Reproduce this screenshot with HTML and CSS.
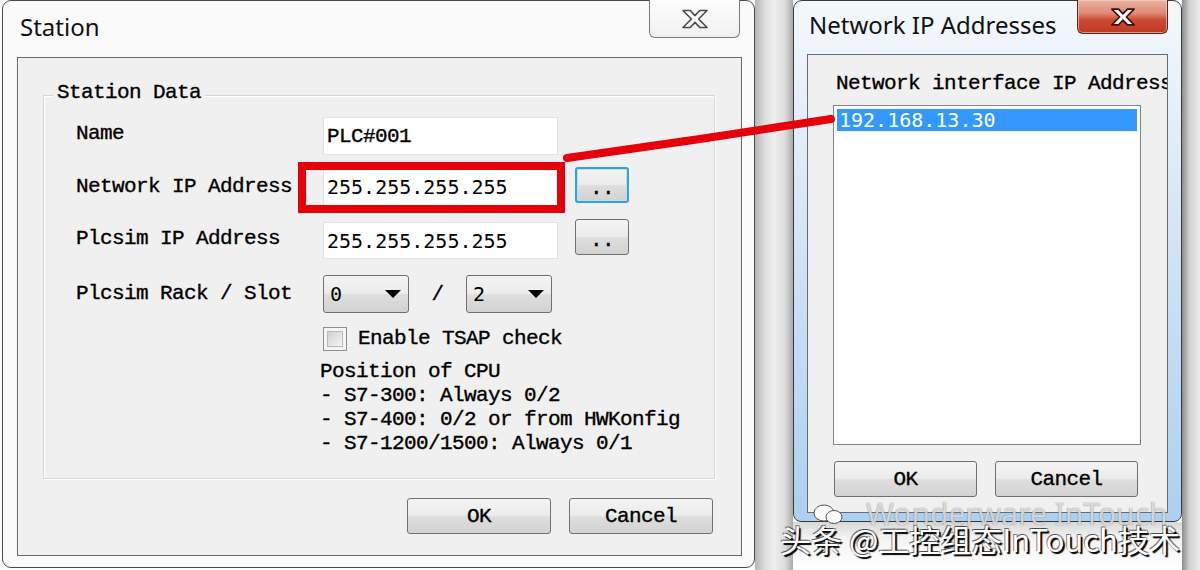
FILE: index.html
```html
<!DOCTYPE html>
<html>
<head>
<meta charset="utf-8">
<link rel="stylesheet" href="styles.css">
</head>
<body>
<div class="screen">
  <div class="win win-left">
    <div class="titlebar">
      <div class="title">Station</div>
      <div class="close close-grey">
        <svg width="28" height="20" viewBox="0 0 28 20"><path d="M2 1.5H9.2L14 6.6L18.8 1.5H26L17.6 10L26 18.5H18.8L14 13.4L9.2 18.5H2L10.4 10Z" fill="#fff" stroke="#4a4a4a" stroke-width="1.6" stroke-linejoin="round"/></svg>
      </div>
    </div>
    <div class="client">
      <div class="group">
        <div class="legend">Station Data</div>
        <div class="row r1">
          <div class="label lift">Name</div>
          <div class="edit">PLC#001</div>
        </div>
        <div class="row r2">
          <div class="label">Network IP Address</div>
          <div class="edit ip e2">255.255.255.255</div>
          <div class="dots focus">..</div>
        </div>
        <div class="row r3">
          <div class="label">Plcsim IP Address</div>
          <div class="edit ip e3">255.255.255.255</div>
          <div class="dots">..</div>
        </div>
        <div class="row r4">
          <div class="label">Plcsim Rack / Slot</div>
          <div class="combo"><span class="cval">0</span><i class="arrow"></i></div>
          <span class="slash">/</span>
          <div class="combo"><span class="cval">2</span><i class="arrow"></i></div>
        </div>
        <div class="row r5">
          <div class="label"></div>
          <div class="check"><span class="check-in"></span></div>
          <span class="check-text">Enable TSAP check</span>
        </div>
        <div class="note">Position of CPU
- S7-300: Always 0/2
- S7-400: 0/2 or from HWKonfig
- S7-1200/1500: Always 0/1</div>
      </div>
      <div class="actions">
        <div class="btn">OK</div>
        <div class="btn">Cancel</div>
      </div>
    </div>
  </div>

  <div class="gap"></div>

  <div class="right-col">
    <div class="win win-right">
      <div class="titlebar tb-right">
        <div class="title">Network IP Addresses</div>
        <div class="close close-red">
          <svg width="26" height="20" viewBox="0 0 28 20"><path d="M2 1.5H9.2L14 6.6L18.8 1.5H26L17.6 10L26 18.5H18.8L14 13.4L9.2 18.5H2L10.4 10Z" fill="#fff" stroke="#3a1410" stroke-width="1.8" stroke-linejoin="round"/></svg>
        </div>
      </div>
      <div class="client client-r">
        <div class="ni-label">Network interface IP Address</div>
        <div class="listbox">
          <div class="sel">192.168.13.30</div>
        </div>
        <div class="actions-r">
          <div class="btn btn-r">OK</div>
          <div class="btn btn-r">Cancel</div>
        </div>
      </div>
    </div>
    <div class="below"></div>
  </div>

  <div class="edge"></div>

  <svg class="annot" width="1200" height="570" viewBox="0 0 1200 570">
    <rect x="302" y="166" width="259" height="43" fill="none" stroke="#e6000a" stroke-width="8"/>
    <path d="M567 158 L700 139 L831 119" fill="none" stroke="#e6000a" stroke-width="8" stroke-linecap="round"/>
  </svg>

  <div class="wm-ghost">Wonderware InTouch</div>
  <svg class="wm-icon" width="34" height="24" viewBox="0 0 34 24">
    <ellipse cx="12" cy="11" rx="10" ry="8" fill="#fff" stroke="#555" stroke-width="1"/>
    <ellipse cx="22" cy="15" rx="8" ry="6.5" fill="#fff" stroke="#555" stroke-width="1"/>
  </svg>
  <div class="watermark">头条 @工控组态InTouch技术</div>
</div>
</body>
</html>
```

FILE: styles.css
```css
* { box-sizing: border-box; }

body {
  margin: 0;
  width: 1200px;
  height: 570px;
  overflow: hidden;
  background: #ffffff;
  font-family: "Liberation Mono", "DejaVu Sans Mono", monospace;
  font-size: 21px;
  letter-spacing: -0.6px;
  color: #000;
  -webkit-text-stroke: 0.35px #000;
}

.screen {
  position: relative;
  display: flex;
  align-items: flex-start;
  width: 1200px;
  height: 570px;
}

/* ---------- windows ---------- */
.win {
  display: flex;
  flex-direction: column;
  flex: none;
}

.win-left {
  margin-left: 2px;
  width: 753px;
  height: 568px;
  border: 1px solid #4a4a4a;
  border-radius: 9px;
  background: #fafafa;
}

.titlebar {
  display: flex;
  justify-content: space-between;
  align-items: flex-start;
  height: 56px;
  flex: none;
}

.title {
  padding: 10px 0 0 17px;
  font-family: "Noto Sans", "Open Sans", sans-serif;
  font-size: 24px;
  line-height: 32px;
  letter-spacing: 0;
  color: #111;
  -webkit-text-stroke: 0;
}

.close {
  width: 91px;
  height: 38px;
  margin-top: -1px;
  margin-right: 14px;
  border: 1px solid #7a7a7a;
  border-top: none;
  border-radius: 0 0 6px 6px;
  display: flex;
  align-items: center;
  justify-content: center;
}

.close-grey {
  background: linear-gradient(#fdfdfd, #f0f0f0);
}

.client {
  margin: 0 12px 11px 14px;
  height: 499px;
  border: 1px solid #6a6a6a;
  background: #f0f0f0;
  display: flex;
  flex-direction: column;
  flex: none;
}

/* ---------- group box ---------- */
.group {
  margin: 37px 26px 0 25px;
  height: 384px;
  border: 1px solid #d6d6d6;
  box-shadow: inset 1px 1px 0 #fff, 1px 1px 0 #fff;
  flex: none;
}

.legend {
  width: max-content;
  margin: -15px 0 0 9px;
  padding: 0 4px;
  background: #f0f0f0;
  line-height: 24px;
}

.row {
  display: flex;
  align-items: flex-start;
  padding-left: 32px;
}

.r1 { margin-top: 12px; height: 38px; }
.r2 { margin-top: 12px; height: 39px; }
.r3 { margin-top: 13px; height: 40px; }
.r4 { margin-top: 16px; height: 38px; }
.r5 { margin-top: 14px; height: 24px; }

.label {
  width: 247px;
  align-self: center;
  white-space: pre;
  line-height: 24px;
  flex: none;
}

.lift { margin-bottom: 4px; }

.edit {
  width: 235px;
  height: 38px;
  background: #fff;
  border: 1px solid #e2e2e2;
  padding-left: 3px;
  display: flex;
  align-items: center;
  flex: none;
}

.ip {
  font-family: "DejaVu Sans Mono", monospace;
  font-size: 20px;
  letter-spacing: 0;
  -webkit-text-stroke: 0;
}

.e2 { margin-top: 1px; }
.e3 { margin-top: 3px; height: 37px; }

.dots {
  width: 54px;
  height: 36px;
  margin-left: 17px;
  border: 1px solid #6f6f6f;
  border-radius: 3px;
  background: linear-gradient(#f3f3f3 0%, #ececec 48%, #dedede 52%, #d2d2d2 100%);
  display: flex;
  justify-content: center;
  align-items: center;
  padding-top: 6px;
  flex: none;
}

.dots.focus {
  border: 2px solid #3a9fd6;
  box-shadow: inset 0 0 0 1px #b6e3f8;
}

.combo {
  width: 86px;
  height: 38px;
  border: 1px solid #6f6f6f;
  border-radius: 3px;
  background: linear-gradient(#f3f3f3 0%, #ececec 48%, #dedede 52%, #d2d2d2 100%);
  display: flex;
  align-items: center;
  justify-content: space-between;
  padding: 0 7px 0 6px;
  font-family: "DejaVu Sans Mono", monospace;
  font-size: 20px;
  letter-spacing: 0;
  -webkit-text-stroke: 0;
  flex: none;
}

.arrow {
  width: 0;
  height: 0;
  border-left: 8px solid transparent;
  border-right: 8px solid transparent;
  border-top: 8px solid #000;
}

.slash {
  width: 57px;
  text-align: center;
  align-self: center;
  flex: none;
}

.check {
  width: 24px;
  height: 24px;
  border: 1px solid #8e8f8f;
  background: #f4f4f4;
  padding: 3px;
  flex: none;
}

.check-in {
  display: block;
  width: 100%;
  height: 100%;
  border: 1px solid #b9b9b9;
  background: linear-gradient(135deg, #cfcfcf, #f6f6f6);
}

.check-text {
  margin-left: 11px;
  align-self: center;
  line-height: 24px;
  white-space: pre;
}

.note {
  margin: 9px 0 0 276px;
  line-height: 24px;
  white-space: pre;
}

/* ---------- buttons ---------- */
.actions {
  display: flex;
  justify-content: flex-end;
  gap: 18px;
  margin-top: 19px;
  padding-right: 28px;
}

.btn {
  width: 144px;
  height: 36px;
  border: 1px solid #6f6f6f;
  border-radius: 3px;
  background: linear-gradient(#f3f3f3 0%, #ececec 48%, #dedede 52%, #d2d2d2 100%);
  display: flex;
  align-items: center;
  justify-content: center;
  flex: none;
}

.btn-r { width: 143px; }

/* ---------- gap between windows ---------- */
.gap {
  width: 38px;
  height: 570px;
  flex: none;
  background: linear-gradient(to right, #b4b4b4 0%, #dcdcdc 25%, #efefef 50%, #dadada 80%, #a9a9a9 100%);
}

/* ---------- right window ---------- */
.right-col {
  width: 389px;
  height: 570px;
  flex: none;
  display: flex;
  flex-direction: column;
}

.win-right {
  width: 389px;
  height: 522px;
  border: 1px solid #3a3a3a;
  border-radius: 9px 9px 8px 8px;
  background: linear-gradient(#f4f8fc 0%, #e2edf8 25%, #c8def3 60%, #acd0f1 100%);
}

.tb-right { height: 53px; }

.tb-right .title {
  padding: 8px 0 0 15px;
}

.close-red {
  width: 91px;
  height: 34px;
  margin-right: 13px;
  border: 1px solid #5a2219;
  border-top: none;
  background: linear-gradient(#eab2a4 0%, #df8a75 40%, #cc4a33 60%, #c0391f 100%);
  box-shadow: inset 0 0 0 1px rgba(255, 210, 200, 0.6);
}

.client-r {
  margin: 0 13px 8px 13px;
  height: 459px;
  overflow: hidden;
  border: 1px solid #6c6c6c;
}

.ni-label {
  margin: 17px 0 0 28px;
  line-height: 24px;
  white-space: nowrap;
}

.listbox {
  margin: 9px 0 0 25px;
  width: 308px;
  height: 340px;
  border: 1px solid #7f848c;
  background: #fff;
  padding: 3px;
  flex: none;
}

.sel {
  height: 22px;
  background: #3399ff;
  color: #fff;
  padding-left: 2px;
  font-family: "DejaVu Sans Mono", monospace;
  font-size: 20px;
  line-height: 22px;
  letter-spacing: 0;
  -webkit-text-stroke: 0;
}

.actions-r {
  display: flex;
  gap: 18px;
  margin: 16px 0 0 26px;
}

.below {
  flex: 1;
  background: linear-gradient(#d8d8d8 0%, #f4f4f4 35%, #ffffff 100%);
}

.edge {
  flex: 1;
  height: 570px;
  background: linear-gradient(to right, #8c8c8c 0%, #cfcfcf 40%, #ececec 100%);
}

/* ---------- overlays ---------- */
.annot {
  position: absolute;
  left: 0;
  top: 0;
  pointer-events: none;
}

.watermark {
  position: absolute;
  left: 780px;
  top: 518px;
  font-family: "Noto Sans CJK SC", "Noto Sans", sans-serif;
  font-size: 31px;
  line-height: 42px;
  letter-spacing: 0;
  color: #fff;
  white-space: nowrap;
  -webkit-text-stroke: 0;
  text-shadow: 2px 2px 1px #000, -1px -1px 0 rgba(0, 0, 0, 0.5), 1px -1px 0 rgba(0, 0, 0, 0.4);
}

.wm-ghost {
  position: absolute;
  left: 866px;
  top: 494px;
  font-family: "Noto Sans", sans-serif;
  font-size: 30px;
  line-height: 40px;
  letter-spacing: 0;
  color: rgba(255, 255, 255, 0.75);
  white-space: nowrap;
  -webkit-text-stroke: 0;
  text-shadow: 0 0 1px rgba(0, 0, 0, 0.6);
}

.wm-icon {
  position: absolute;
  left: 812px;
  top: 502px;
}
```
